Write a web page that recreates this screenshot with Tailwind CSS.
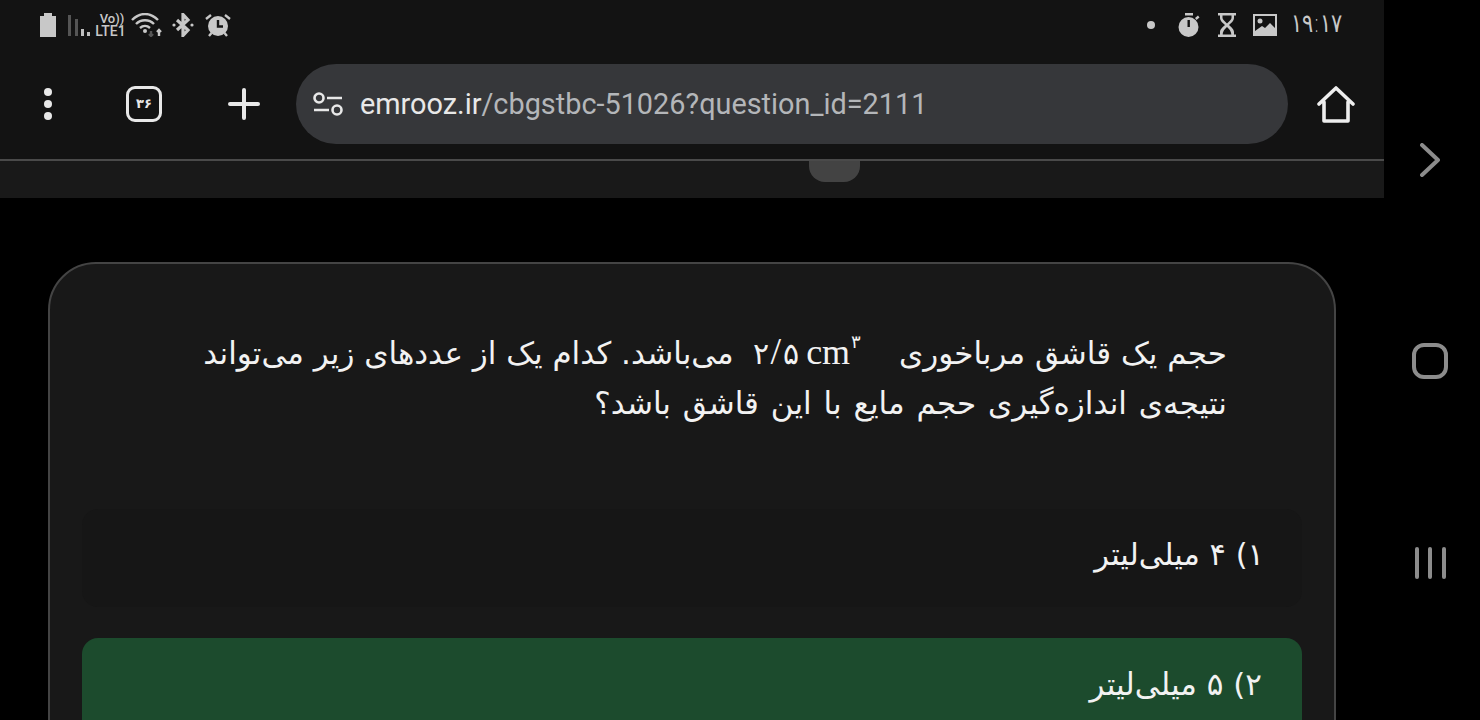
<!DOCTYPE html>
<html lang="fa">
<head>
  <meta charset="UTF-8" />
  <title>emrooz.ir</title>
  <script src="https://cdn.jsdelivr.net/npm/@tailwindcss/browser@4"></script>
</head>
<body class="bg-black w-[1480px] h-[720px] overflow-hidden flex font-['Roboto',sans-serif]">

  <!-- browser + page -->
  <div class="w-[1384px] h-[720px] shrink-0 flex flex-col overflow-hidden">

    <!-- status bar -->
    <div class="bg-[#131313] h-[50px] shrink-0 pl-[40px] pr-[40px] flex items-center justify-between">
      <div class="flex items-center">
        <svg width="16" height="24" viewBox="0 0 16 24" class="mr-[12px]"><path d="M4 0h8v3h4v21H0V3h4z" fill="#c8c8c8"/></svg>
        <svg width="22" height="22" viewBox="0 0 22 22" class="mr-[5px] mt-[1px]"><path d="M0 0h3v21H0zM7 4h3v17H7z" fill="#555"/><path d="M13 14h3v7h-3zM19 17h3v4h-3z" fill="#c0c0c0"/></svg>
        <div class="w-[31px] flex flex-col items-center text-[#c8c8c8] font-medium leading-[13px] mr-[5px]"><span class="text-[13px] pl-[3px]">Vo))</span><span class="text-[14px]">LTE1</span></div>
        <svg width="33" height="24" viewBox="0 0 33 24" fill="none" stroke="#c8c8c8" stroke-width="2.4" class="mr-[8px]">
          <path d="M1 7C9-1 19-1 27 7M5 11c5-5 13-5 18 0M9 15c3-2.600 7-2.600 10 0"/>
          <circle cx="14" cy="18" r="2" fill="#c8c8c8" stroke="none"/>
          <path d="M20 18v5M18 21l2 2 2-2" stroke="#555"/>
          <path d="M28 23v-6M26 19l2-2 2 2"/>
        </svg>
        <svg width="22" height="24" viewBox="0 0 22 24" fill="none" stroke="#c8c8c8" stroke-width="3.200" class="mr-[11px]">
          <path d="M5 7l11 10-5 5.500V1.500l5 5.500L5 17"/>
          <circle cx="2" cy="12" r="1.600" fill="#c8c8c8" stroke="none"/><circle cx="20" cy="12" r="1.600" fill="#c8c8c8" stroke="none"/>
        </svg>
        <svg width="26" height="24" viewBox="0 0 26 24" fill="none">
          <circle cx="13" cy="13" r="10" fill="#c8c8c8"/>
          <path d="M13 7v6.500h5" stroke="#131313" stroke-width="2.400"/>
          <path d="M1 6l5-4M25 6l-5-4M4 23l2.500-3M22 23l-2.500-3" stroke="#c8c8c8" stroke-width="2.400"/>
        </svg>
      </div>
      <div class="flex items-center">
        <div class="w-[8px] h-[8px] rounded-full bg-[#c8c8c8] mr-[23px]"></div>
        <svg width="22" height="24" viewBox="0 0 22 24" class="mr-[17px]">
          <path d="M7 0h8v2.500H7z" fill="#c8c8c8"/>
          <circle cx="10.500" cy="14" r="10" fill="#c8c8c8"/>
          <path d="M17 5l3-2.500 1.500 2-3 2.500z" fill="#c8c8c8"/>
          <path d="M9.500 7h2.400v7H9.500z" fill="#131313"/>
        </svg>
        <svg width="20" height="24" viewBox="0 0 20 24" class="mr-[16px]">
          <path d="M1 0h18v2.500h-2V5c0 3-3 5-5 7 2 2 5 4 5 7v2.500h2V24H1v-2.500h2V19c0-3 3-5 5-7-2-2-5-4-5-7V2.500H1zM5.500 2.500V5c0 1.500 2.500 3.500 4.500 5.500 2-2 4.500-4 4.500-5.500V2.500zM10 14c-2 2-4 3.500-4.300 7.500h8.600C14 17.500 12 16 10 14z" fill="#c8c8c8" fill-rule="evenodd"/>
        </svg>
        <svg width="24" height="22" viewBox="0 0 24 22" class="mr-[14px]">
          <path d="M0 0h24v22H0z" fill="#c8c8c8"/>
          <path d="M2 2h20v12l-5-5-5 5-3-2-7 5z" fill="#131313"/>
          <circle cx="7" cy="7" r="2.500" fill="#c8c8c8"/>
        </svg>
        <span class="w-[53px] mb-[4px] whitespace-nowrap text-[#c8c8c8] text-[21px] leading-[24px] font-['DejaVu_Sans',sans-serif] font-light scale-y-125">۱۹:۱۷</span>
      </div>
    </div>

    <!-- toolbar -->
    <div class="bg-[#131313] h-[109px] shrink-0 flex items-start pt-[14px]">
      <div class="w-[96px] h-[80px] flex flex-col items-center justify-center gap-[4px]">
        <div class="w-[8px] h-[8px] rounded-full bg-[#e8e8e8]"></div>
        <div class="w-[8px] h-[8px] rounded-full bg-[#e8e8e8]"></div>
        <div class="w-[8px] h-[8px] rounded-full bg-[#e8e8e8]"></div>
      </div>
      <div class="w-[96px] h-[80px] flex items-center justify-center">
        <div class="w-[36px] h-[36px] rounded-[9px] border-[3px] border-[#e8e8e8] flex items-center justify-center text-[#e8e8e8] text-[13px] font-bold font-['DejaVu_Sans',sans-serif]">۳۶</div>
      </div>
      <div class="w-[104px] h-[80px] flex items-center pl-[36px]">
        <svg width="32" height="32" viewBox="0 0 32 32" stroke="#e8e8e8" stroke-width="4" stroke-linecap="round"><path d="M16 2v28M2 16h28"/></svg>
      </div>
      <div class="w-[992px] h-[80px] rounded-full bg-[#36373a] flex items-center pl-[17px]">
        <svg width="30" height="24" viewBox="0 0 30 24" fill="none" stroke="#e8e8e8" stroke-width="2.600" class="mr-[17px]">
          <circle cx="6" cy="6" r="4.500"/><path d="M14 6h15M1 18h15"/><circle cx="24" cy="18" r="4.500"/>
        </svg>
        <span class="text-[28.85px] leading-none text-[#b4b6b9]"><span class="text-[#e8e8e8]">emrooz.ir</span>/cbgstbc-51026?question_id=2111</span>
      </div>
      <div class="w-[96px] h-[80px] flex items-center justify-center">
        <svg width="38" height="38" viewBox="0 0 38 38" fill="none" stroke="#eeeeee" stroke-width="3.600" stroke-linejoin="round" stroke-linecap="round"><path d="M2 19L19 3l17 16M7 17v19h24V17"/></svg>
      </div>
    </div>

    <!-- sheet handle strip -->
    <div class="h-[2px] shrink-0 bg-[#4a4a4a]"></div>
    <div class="h-[37px] shrink-0 bg-[#191919] pl-[809px]">
      <div class="w-[51px] h-[21px] bg-[#434343] rounded-b-[16px]"></div>
    </div>

    <!-- question card -->
    <div class="ml-[48px] mt-[64px] w-[1288px] h-[600px] bg-[#181818] border-2 border-[#444] rounded-[48px] px-[32px] shrink-0">
      <p dir="rtl" class="pt-[64px] pr-[75px] pl-[100px] text-[#f2f2f2] text-[31px] leading-[50px] font-['DejaVu_Sans',sans-serif]">
        حجم یک قاشق مرباخوری
        <span dir="ltr" class="inline-block leading-[30px] ml-[9px] mr-[28px] font-['Liberation_Serif',serif] text-[30px]">۲<span class="text-[38px] font-extralight leading-none mx-[2px]">/</span>۵<span class="text-[36px] leading-none ml-[7px]">cm</span><sup class="text-[18px] ml-[1px] top-[-16px]">۳</sup></span>
        می‌باشد. کدام یک از عددهای زیر می‌تواند
        <span class="[word-spacing:2px]">نتیجه‌ی اندازه‌گیری حجم مایع با این قاشق باشد؟</span>
      </p>
      <div dir="rtl" class="mt-[81px] h-[98px] rounded-[16px] bg-[#161616] flex items-center pr-[38px] pb-[6px] text-[#f2f2f2] text-[30.5px] font-['DejaVu_Sans',sans-serif]">۱) ۴ میلی‌لیتر</div>
      <div dir="rtl" class="mt-[31px] h-[98px] rounded-[16px] bg-[#1c4b2d] flex items-center pr-[40px] pb-[6px] text-[#f2f2f2] text-[31px] font-['DejaVu_Sans',sans-serif]">۲) ۵ میلی‌لیتر</div>
    </div>
  </div>

  <!-- system nav -->
  <div class="w-[96px] pr-[4px] flex flex-col items-center pt-[143px] gap-[166px]">
    <svg width="20" height="34" viewBox="0 0 20 34" fill="none" stroke="#8c8c8c" stroke-width="4" stroke-linecap="round" stroke-linejoin="round"><path d="M2 2l16 15L2 32"/></svg>
    <div class="w-[36px] h-[36px] rounded-[12px] border-[4px] border-[#8c8c8c]"></div>
    <div class="flex gap-[9.500px] h-[32px] mt-[2px]">
      <div class="w-[4px] rounded-full bg-[#8c8c8c]"></div>
      <div class="w-[4px] rounded-full bg-[#8c8c8c]"></div>
      <div class="w-[4px] rounded-full bg-[#8c8c8c]"></div>
    </div>
  </div>
</body>
</html>
